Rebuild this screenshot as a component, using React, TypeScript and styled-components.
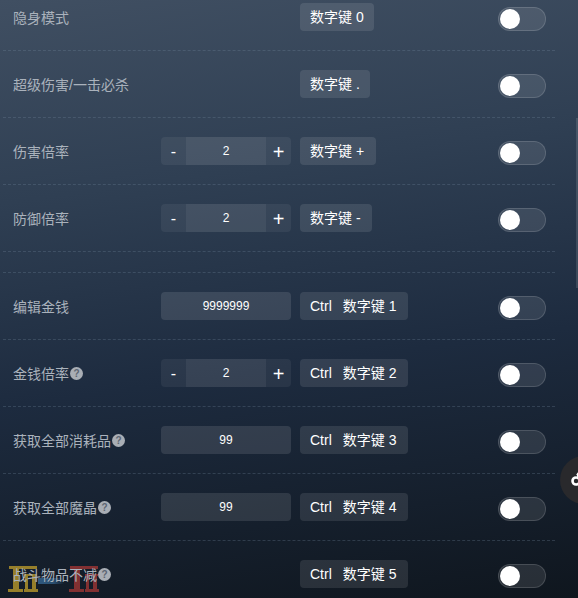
import styled, { createGlobalStyle } from "styled-components";

const GlobalStyle = createGlobalStyle`
  html, body {
    margin: 0;
    padding: 0;
    height: 100%;
    overflow: hidden;
    background: #10161f;
  }
  #root {
    height: 100%;
  }
`;

type Cheat = {
  label: string;
  help?: boolean;
  kind?: "stepper" | "input";
  value?: string;
  keys: string[];
  keyWidth: number;
};

const TOP_CHEATS: Cheat[] = [
  { label: "隐身模式", keys: ["数字键 0"], keyWidth: 74 },
  { label: "超级伤害/一击必杀", keys: ["数字键 ."], keyWidth: 70 },
  { label: "伤害倍率", kind: "stepper", value: "2", keys: ["数字键 +"], keyWidth: 76 },
  { label: "防御倍率", kind: "stepper", value: "2", keys: ["数字键 -"], keyWidth: 72 },
];

const BOTTOM_CHEATS: Cheat[] = [
  { label: "编辑金钱", kind: "input", value: "9999999", keys: ["Ctrl", "数字键 1"], keyWidth: 108 },
  { label: "金钱倍率", help: true, kind: "stepper", value: "2", keys: ["Ctrl", "数字键 2"], keyWidth: 108 },
  { label: "获取全部消耗品", help: true, kind: "input", value: "99", keys: ["Ctrl", "数字键 3"], keyWidth: 108 },
  { label: "获取全部魔晶", help: true, kind: "input", value: "99", keys: ["Ctrl", "数字键 4"], keyWidth: 108 },
  { label: "战斗物品不减", help: true, keys: ["Ctrl", "数字键 5"], keyWidth: 108 },
];

const Row = ({ cheat }: { cheat: Cheat }) => (
  <RowWrap>
    <Label>
      {cheat.label}
      {cheat.help && <Help>?</Help>}
    </Label>
    <Control>
      {cheat.kind === "stepper" && (
        <Stepper>
          <StepButton>-</StepButton>
          <StepValue>{cheat.value}</StepValue>
          <StepButton $large>+</StepButton>
        </Stepper>
      )}
      {cheat.kind === "input" && <ValueBox>{cheat.value}</ValueBox>}
    </Control>
    <KeyBox $width={cheat.keyWidth}>
      {cheat.keys.map((k) => (
        <KeyName key={k}>{k}</KeyName>
      ))}
    </KeyBox>
    <Toggle>
      <Knob />
    </Toggle>
  </RowWrap>
);

// 角落水印
const Mark = ({ color }: { color: string }) => (
  <svg width="30" height="28" viewBox="0 0 30 28" fill={color}>
    <path d="M1 1h28v3H16v5h13v2h-1v13h2v3H15v-3h2V11h-1V4H11v20h5v3H0v-3h5V4H1zM20 11v13h4V11z" fillRule="evenodd" />
  </svg>
);

export default function App() {
  return (
    <Page>
      <GlobalStyle />
      <Watermark>
        <Mark color="#a58a2b" />
        <Smear />
        <Mark color="#8e3333" />
      </Watermark>
      <List>
        {TOP_CHEATS.map((c) => (
          <Row key={c.label} cheat={c} />
        ))}
        <Spacer />
        {BOTTOM_CHEATS.map((c) => (
          <Row key={c.label} cheat={c} />
        ))}
      </List>
      <Scrollbar />
      <FloatButton>
        <svg width="12" height="20" viewBox="0 0 12 20" fill="none" stroke="#fff" strokeWidth="2.600">
          <circle cx="6" cy="11" r="3.500" />
          <path d="M7 3.500q1.500 1 1.500 4" />
        </svg>
      </FloatButton>
    </Page>
  );
}

const Page = styled.div`
  position: relative;
  width: 578px;
  height: 598px;
  overflow: hidden;
  background: linear-gradient(172deg, #404f62 0%, #2f3f53 30%, #1d2b3f 60%, #0f161e 100%);
  font-family: "Liberation Sans", "Noto Sans CJK SC", sans-serif;
`;

const List = styled.div`
  position: relative;
  margin: -16px 0 0 3px;
  width: 552px;
`;

const RowWrap = styled.div`
  height: 66px;
  padding-left: 10px;
  display: flex;
  align-items: center;
  border-bottom: 1px dashed rgba(120, 140, 160, 0.28);
`;

const Spacer = styled.div`
  height: 20px;
  border-bottom: 1px dashed rgba(120, 140, 160, 0.28);
`;

const Label = styled.div`
  width: 148px;
  flex-shrink: 0;
  display: flex;
  align-items: center;
  font-size: 14px;
  color: #aab2bc;
`;

const Help = styled.span`
  width: 13px;
  height: 13px;
  margin-left: 1px;
  border-radius: 50%;
  background: #a9aeb5;
  color: #5d6673;
  font-size: 10px;
  font-weight: 700;
  line-height: 13px;
  text-align: center;
`;

const Control = styled.div`
  width: 130px;
  height: 28px;
  margin-right: 9px;
  flex-shrink: 0;
`;

const Stepper = styled.div`
  height: 100%;
  display: flex;
  border-radius: 4px;
  overflow: hidden;
  background: rgba(255, 255, 255, 0.06);
`;

const StepButton = styled.div<{ $large?: boolean }>`
  width: 25px;
  flex-shrink: 0;
  text-align: center;
  color: #fff;
  font-size: ${({ $large }) => ($large ? "20px" : "16px")};
  line-height: 30px;
`;

const StepValue = styled.div`
  width: 80px;
  text-align: center;
  color: #fff;
  font-size: 12px;
  line-height: 28px;
  background: rgba(255, 255, 255, 0.06);
`;

const ValueBox = styled.div`
  height: 100%;
  border-radius: 4px;
  background: rgba(255, 255, 255, 0.11);
  text-align: center;
  color: #fff;
  font-size: 12px;
  line-height: 28px;
`;

const KeyBox = styled.div<{ $width: number }>`
  width: ${({ $width }) => $width}px;
  height: 28px;
  box-sizing: border-box;
  padding-left: 10px;
  border-radius: 4px;
  background: rgba(255, 255, 255, 0.1);
  color: #fff;
  font-size: 14px;
  line-height: 29px;
  white-space: pre;
`;

const KeyName = styled.span`
  margin-right: 11px;
`;

const Toggle = styled.div`
  width: 48px;
  height: 24px;
  margin: 4px 9px 0 auto;
  box-sizing: border-box;
  padding: 1px;
  border-radius: 12px;
  border: 1px solid rgba(255, 255, 255, 0.14);
  background: rgba(255, 255, 255, 0.1);
`;

const Knob = styled.div`
  width: 20px;
  height: 20px;
  border-radius: 50%;
  background: #fff;
`;

const Scrollbar = styled.div`
  position: absolute;
  top: 118px;
  right: 0;
  width: 2px;
  height: 170px;
  background: rgba(255, 255, 255, 0.12);
`;

const FloatButton = styled.div`
  position: absolute;
  left: 560px;
  top: 456px;
  width: 48px;
  height: 48px;
  padding: 14px 0 0 10px;
  box-sizing: border-box;
  border-radius: 50%;
  background: #29292c;
`;

const Watermark = styled.div`
  position: absolute;
  left: 8px;
  top: 565px;
  display: flex;
  opacity: 0.9;
`;

const Smear = styled.div`
  width: 31px;
  height: 6px;
  margin-top: 13px;
  background: linear-gradient(90deg, rgba(70, 140, 200, 0.6) 0%, rgba(70, 140, 200, 0.5) 50%, rgba(70, 140, 200, 0) 85%);
`;
